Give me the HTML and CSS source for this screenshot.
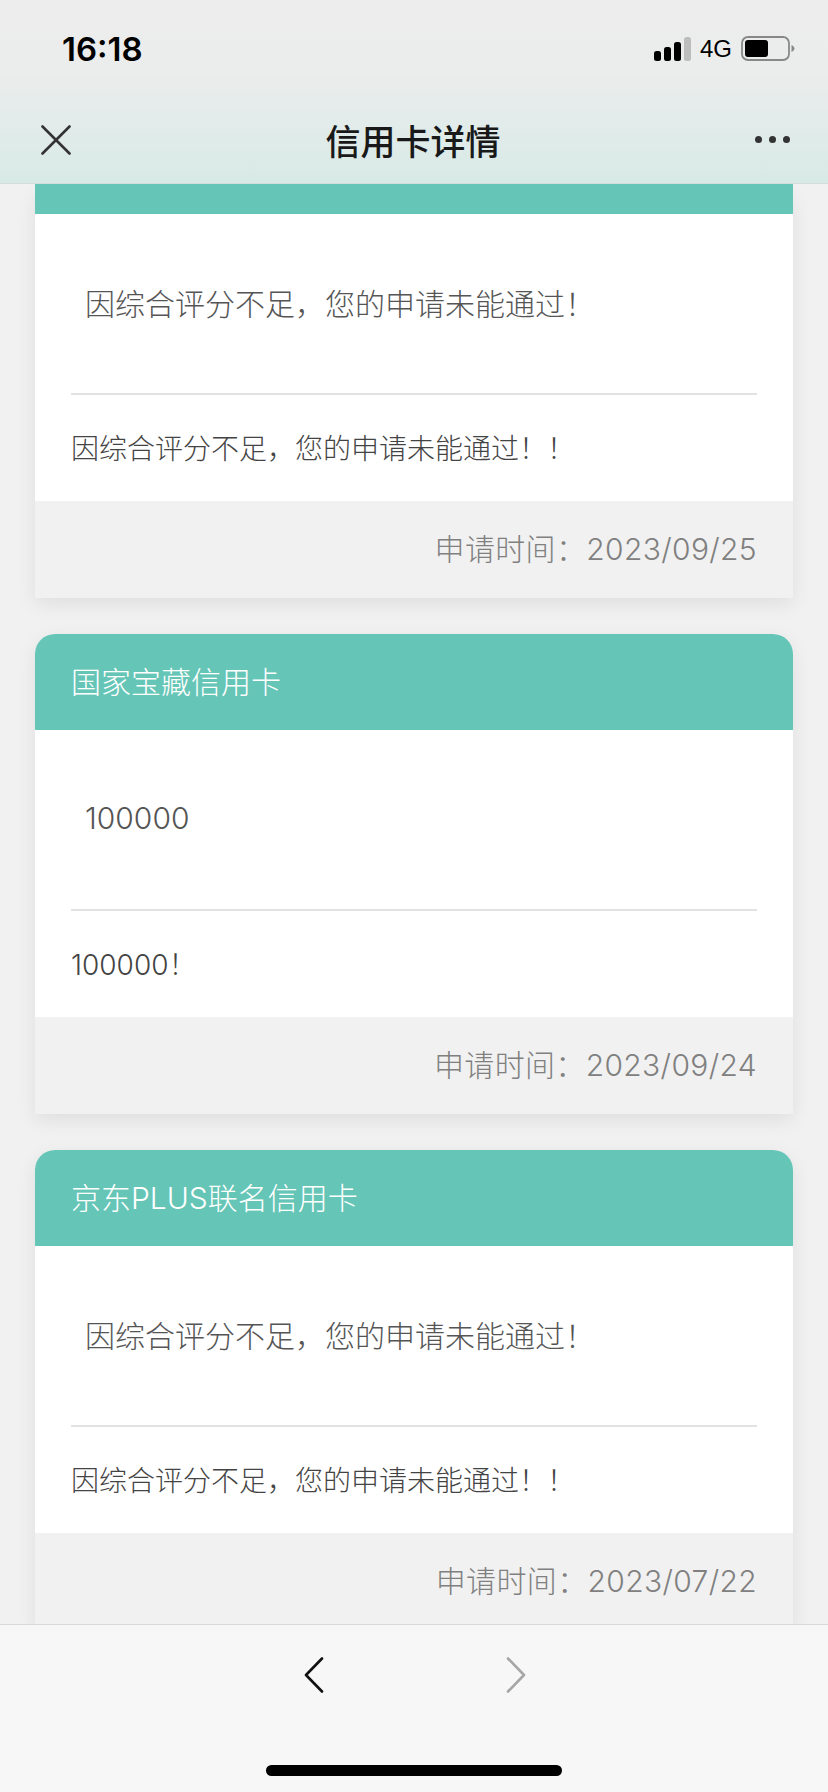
FILE: index.html
```html
<!DOCTYPE html>
<html lang="zh-CN">
  <head>
    <meta charset="UTF-8" />
    <meta name="viewport" content="width=device-width, initial-scale=1.0" />
    <title>信用卡详情</title>
    <link rel="stylesheet" href="styles.css">
  </head>
  <body>
    <div class="top">
      <div class="status">
        <span class="clock">16:18</span>
        <div class="status-right">
          <svg class="signal" width="37" height="24" viewBox="0 0 37 24">
            <rect x="0" y="14" width="7" height="10" rx="2.5" fill="#000" />
            <rect x="10" y="10" width="7" height="14" rx="2.5" fill="#000" />
            <rect x="20" y="5" width="7" height="19" rx="2.5" fill="#000" />
            <rect x="30" y="0" width="7" height="24" rx="2.5" fill="#bdbdbd" />
          </svg>
          <span class="net">4G</span>
          <svg class="battery" width="54" height="26" viewBox="0 0 54 26">
            <rect x="1" y="1" width="47" height="23" rx="6" fill="none" stroke="#888" stroke-width="1.8" />
            <rect x="4" y="4" width="23" height="17" rx="3" fill="#000" />
            <path d="M50.5 9 C52.5 10 53.5 11.5 53.5 12.5 C53.5 13.5 52.5 15 50.5 16 Z" fill="#888" />
          </svg>
        </div>
      </div>
      <div class="nav">
        <svg class="nav-close" width="30" height="30" viewBox="0 0 30 30">
          <path d="M1.5 1.5 L28.5 28.5 M28.5 1.5 L1.5 28.5" stroke="#333" stroke-width="2.6" stroke-linecap="round" />
        </svg>
        <h1 class="nav-title">信用卡详情</h1>
        <div class="nav-more"><i></i><i></i><i></i></div>
      </div>
    </div>

    <div class="list">
      <div class="card">
        <div class="card-head cut"></div>
        <div class="card-msg">因综合评分不足，您的申请未能通过！</div>
        <div class="card-note">因综合评分不足，您的申请未能通过！！</div>
        <div class="card-foot">申请时间：2023/09/25</div>
      </div>

      <div class="card">
        <div class="card-head">国家宝藏信用卡</div>
        <div class="card-msg">100000</div>
        <div class="card-note">100000！</div>
        <div class="card-foot">申请时间：2023/09/24</div>
      </div>

      <div class="card">
        <div class="card-head">京东PLUS联名信用卡</div>
        <div class="card-msg">因综合评分不足，您的申请未能通过！</div>
        <div class="card-note">因综合评分不足，您的申请未能通过！！</div>
        <div class="card-foot">申请时间：2023/07/22</div>
      </div>
    </div>

    <div class="bottom">
      <div class="arrows">
        <svg width="20" height="36" viewBox="0 0 20 36">
          <path d="M18 1.5 L2 18 L18 34.5" fill="none" stroke="#111" stroke-width="2.6" stroke-linecap="round" stroke-linejoin="round" />
        </svg>
        <svg width="20" height="36" viewBox="0 0 20 36">
          <path d="M2 1.5 L18 18 L2 34.5" fill="none" stroke="#a6a6a6" stroke-width="2.6" stroke-linecap="round" stroke-linejoin="round" />
        </svg>
      </div>
      <div class="home-bar"></div>
    </div>
  </body>
</html>
```

FILE: styles.css
```css
html,
body {
  margin: 0;
  padding: 0;
}

body {
  width: 828px;
  height: 1792px;
  display: flex;
  flex-direction: column;
  overflow: hidden;
  background-color: #f1f1f1;
  font-family: Inter, "Noto Sans CJK SC", sans-serif;
}

/* status bar and title bar */
.top {
  height: 184px;
  flex: none;
  box-sizing: border-box;
  border-bottom: 1px solid #d6dcda;
  background: linear-gradient(180deg, #ededed 0%, #ebecec 40%, #e3ecea 65%, #d8eae6 100%);
}

.status {
  height: 96px;
  box-sizing: border-box;
  padding: 2px 33px 0 62px;
  display: flex;
  justify-content: space-between;
  align-items: center;
}

.clock {
  font-size: 33px;
  font-weight: 600;
  color: #000;
}

.status-right {
  display: flex;
  align-items: center;
  gap: 9px;
}

.net {
  font-family: "Liberation Sans", sans-serif;
  font-size: 24px;
  color: #000;
}

.nav {
  height: 87px;
  padding: 0 38px 0 41px;
  display: flex;
  justify-content: space-between;
  align-items: center;
}

.nav-title {
  margin: 0;
  font-size: 35px;
  font-weight: 500;
  color: #191919;
}

.nav-more {
  display: flex;
  gap: 7px;
}

.nav-more i {
  width: 7px;
  height: 7px;
  border-radius: 50%;
  background-color: #333;
}

/* cards */
.list {
  flex: 1;
  min-height: 0;
  overflow: hidden;
  padding: 0 35px;
  display: flex;
  flex-direction: column;
  gap: 36px;
}

.card {
  flex: none;
  background-color: #fff;
  border-radius: 20px 20px 0 0;
  box-shadow: 0 6px 20px rgba(0, 0, 0, 0.08);
}

.card-head {
  height: 96px;
  box-sizing: border-box;
  padding: 0 36px 4px;
  display: flex;
  align-items: center;
  background-color: #65c5b6;
  border-radius: 20px 20px 0 0;
  font-size: 30px;
  font-weight: 300;
  color: #fff;
}

.card-head.cut {
  height: 30px;
  padding: 0;
  border-radius: 0;
}

.card-msg {
  height: 181px;
  margin: 0 36px;
  padding: 0 14px 4px;
  display: flex;
  align-items: center;
  border-bottom: 2px solid #e2e2e2;
  box-sizing: border-box;
  font-size: 30px;
  font-weight: 300;
  color: #555;
}

.card-note {
  height: 106px;
  box-sizing: border-box;
  padding: 0 36px 2px;
  display: flex;
  align-items: center;
  font-size: 28px;
  font-weight: 300;
  color: #444;
}

.card-foot {
  height: 97px;
  box-sizing: border-box;
  padding: 0 36px 6px;
  display: flex;
  justify-content: flex-end;
  align-items: center;
  background-color: #f1f1f1;
  font-size: 30px;
  font-weight: 300;
  letter-spacing: 0.35px;
  color: #808080;
}

/* bottom toolbar */
.bottom {
  height: 167px;
  flex: none;
  border-top: 1px solid #d9d9d9;
  background-color: #f7f7f7;
  display: flex;
  flex-direction: column;
  align-items: center;
}

.arrows {
  margin-top: 32px;
  margin-left: 2px;
  display: flex;
  gap: 182px;
}

.home-bar {
  width: 296px;
  height: 11px;
  margin-top: 72px;
  border-radius: 6px;
  background-color: #000;
}
```
